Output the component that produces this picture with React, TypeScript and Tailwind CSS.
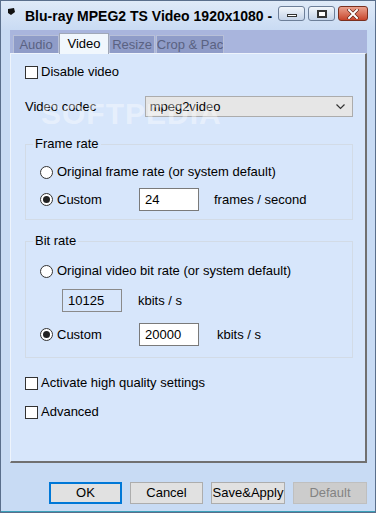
import React from "react";

const Radio = ({ checked }: { checked?: boolean }) => (
  <span className="w-[13px] h-[13px] rounded-full border border-[#333333] bg-white flex items-center justify-center shrink-0">
    {checked && <span className="w-[7px] h-[7px] rounded-full bg-[#222222]" />}
  </span>
);

const Check = () => (
  <span className="w-[13px] h-[13px] border border-[#333333] bg-white shrink-0" />
);

const Tab = ({ label, active }: { label: string; active?: boolean }) =>
  active ? (
    <div className="h-[21px] w-[50px] bg-[#f1f7fd] border border-[#a0a8b8] border-b-0 flex items-center justify-center text-[#000] -mb-px relative z-10">
      {label}
    </div>
  ) : (
    <div className="h-[18px] bg-[#8f9cc8] border border-[#b8c0d8] border-b-0 flex items-center justify-center text-[#5a6282] overflow-hidden whitespace-nowrap">
      {label}
    </div>
  );

export default function App() {
  return (
    <div className="w-[376px] h-[513px] relative bg-[#c8dbf4] border border-[#5a6f8c] flex flex-col font-['Liberation_Sans',sans-serif] text-[13px] text-black select-none overflow-hidden">
      {/* title bar */}
      <div className="h-[29px] relative flex items-center bg-gradient-to-b from-[#dfeaf8] to-[#c9dbf3] shrink-0">
        <svg width="8" height="8" viewBox="0 0 8 8" className="absolute left-[7px] top-[7px]">
          <path d="M0 1 L6 0 L7 4 L3 7 L0 5 Z" fill="#111" />
        </svg>
        <div className="absolute left-[24px] top-[5px] whitespace-nowrap font-bold text-[14px] text-black">
          Blu-ray MPEG2 TS Video 1920x1080 -
        </div>
        {/* min */}
        <div className="absolute left-[277px] top-[5px] w-[27px] h-[15px] rounded-[3px] border border-[#6d7f99] bg-gradient-to-b from-[#f2f6fb] to-[#c4d3e8] flex items-end justify-center pb-[3px]">
          <span className="w-[10px] h-[3px] border border-[#333] bg-white" />
        </div>
        {/* max */}
        <div className="absolute left-[307px] top-[5px] w-[27px] h-[15px] rounded-[3px] border border-[#6d7f99] bg-gradient-to-b from-[#f2f6fb] to-[#c4d3e8] flex items-center justify-center">
          <span className="w-[10px] h-[8px] border-2 border-[#333] bg-white" />
        </div>
        {/* close */}
        <div className="absolute left-[337px] top-[5px] w-[30px] h-[15px] rounded-[3px] border border-[#7a3020] bg-gradient-to-b from-[#e9a08d] to-[#c7432a] flex items-center justify-center">
          <svg width="12" height="10" viewBox="0 0 12 10">
            <path d="M2 1 L10 9 M10 1 L2 9" stroke="#5a1a10" strokeWidth="3.2" strokeLinecap="square" />
            <path d="M2 1 L10 9 M10 1 L2 9" stroke="#ffffff" strokeWidth="2" strokeLinecap="square" />
          </svg>
        </div>
      </div>

      {/* body */}
      <div className="flex-1 flex flex-col pl-[9px] pr-[8px]">
        {/* tab strip */}
        <div className="h-[23px] bg-[#a9b5dd] flex items-end pl-[3px] shrink-0">
          <div className="w-[46px]"><Tab label="Audio" /></div>
          <Tab label="Video" active />
          <div className="w-[46px]"><Tab label="Resize" /></div>
          <div className="w-[1px]" />
          <div className="w-[68px]"><Tab label="Crop &amp; Pac" /></div>
        </div>

        {/* panel */}
        <div className="h-[410px] bg-[#d7e6fb] border-l border-t border-[#eef4fc] border-r-2 border-b-2 border-r-[#707070] border-b-[#707070] flex flex-col pl-[14px] pr-[12px] relative shrink-0">
          {/* watermark */}
          <div className="absolute left-[30px] top-[37px] font-bold text-[30px] tracking-[1px] text-white/40 pointer-events-none z-20">
            SOFTPEDIA
          </div>

          <div className="flex items-center gap-[3px] mt-[11px] h-[14px]">
            <Check />
            <span>Disable video</span>
          </div>

          <div className="flex items-center mt-[17px] h-[21px]">
            <span className="w-[120px]">Video codec</span>
            <div className="w-[209px] h-[21px] bg-[#e6e6e6] border border-[#acacac] flex items-center justify-between pl-[4px] pr-[7px]">
              <span>mpeg2video</span>
              <svg width="9" height="6" viewBox="0 0 9 6">
                <path d="M0.5 0.5 L4.5 4.5 L8.5 0.5" stroke="#333" fill="none" strokeWidth="1.2" />
              </svg>
            </div>
          </div>

          {/* Frame rate group */}
          <div className="mt-[27px] h-[76px] border border-[#d2dbe6] relative flex flex-col pl-[14px] shrink-0">
            <span className="absolute left-[7px] -top-[9px] bg-[#d7e6fb] px-[2px] leading-[16px]">Frame rate</span>
            <div className="flex items-center gap-[4px] mt-[20px] h-[14px]">
              <Radio />
              <span>Original frame rate (or system default)</span>
            </div>
            <div className="flex items-center mt-[9px] h-[23px]">
              <Radio checked />
              <span className="ml-[4px] w-[82px]">Custom</span>
              <div className="w-[60px] h-[23px] bg-white border border-[#7a7a7a] flex items-center pl-[5px]">24</div>
              <span className="ml-[15px]">frames / second</span>
            </div>
          </div>

          {/* Bit rate group */}
          <div className="mt-[21px] h-[117px] border border-[#d2dbe6] relative flex flex-col pl-[14px] shrink-0">
            <span className="absolute left-[7px] -top-[9px] bg-[#d7e6fb] px-[2px] leading-[16px]">Bit rate</span>
            <div className="flex items-center gap-[4px] mt-[22px] h-[14px]">
              <Radio />
              <span>Original video bit rate (or system default)</span>
            </div>
            <div className="flex items-center mt-[11px] h-[23px] pl-[22px]">
              <div className="w-[60px] h-[23px] bg-[#d7e6fb] border border-[#8a8a8a] flex items-center pl-[5px]">10125</div>
              <span className="ml-[16px]">kbits / s</span>
            </div>
            <div className="flex items-center mt-[11px] h-[23px]">
              <Radio checked />
              <span className="ml-[4px] w-[82px]">Custom</span>
              <div className="w-[60px] h-[23px] bg-white border border-[#7a7a7a] flex items-center pl-[5px]">20000</div>
              <span className="ml-[18px]">kbits / s</span>
            </div>
          </div>

          <div className="flex items-center gap-[3px] mt-[18px] h-[14px]">
            <Check />
            <span>Activate high quality settings</span>
          </div>
          <div className="flex items-center gap-[3px] mt-[15px] h-[14px]">
            <Check />
            <span>Advanced</span>
          </div>
        </div>

        {/* buttons */}
        <div className="flex justify-end gap-[8px] mt-[19px] h-[22px] shrink-0">
          <div className="w-[73px] h-[22px] bg-[#e1e1e1] border-2 border-[#0078d7] flex items-center justify-center">OK</div>
          <div className="w-[73px] h-[22px] bg-[#e1e1e1] border border-[#adadad] flex items-center justify-center">Cancel</div>
          <div className="w-[74px] h-[22px] bg-[#e1e1e1] border border-[#adadad] flex items-center justify-center">Save&amp;Apply</div>
          <div className="w-[74px] h-[22px] bg-[#cccccc] border border-[#bfbfbf] flex items-center justify-center text-[#838383]">Default</div>
        </div>
      </div>
      <div className="h-[1px] bg-[#3aa0b8] shrink-0" />
    </div>
  );
}
